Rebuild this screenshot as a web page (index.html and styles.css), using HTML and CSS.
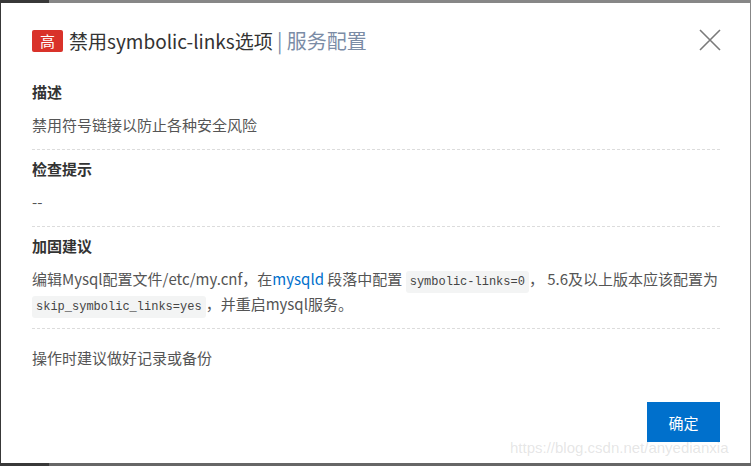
FILE: index.html
```html
<!DOCTYPE html>
<html lang="zh-CN">
  <head>
    <meta charset="UTF-8" />
    <meta name="viewport" content="width=device-width, initial-scale=1.0" />
    <title>禁用symbolic-links选项</title>
    <link rel="stylesheet" href="styles.css">
  </head>
  <body>
    <div class="modal">
      <div class="modal-header">
        <h2 class="modal-title">
          <span class="badge-high">高</span>禁用symbolic-links选项 <span class="title-sub">| 服务配置</span>
        </h2>
        <button type="button" class="btn-close" aria-label="关闭">
          <svg width="22" height="22" viewBox="0 0 22 22">
            <path d="M1 1 L21 21 M21 1 L1 21" stroke="#7a7a7a" stroke-width="1.6" fill="none" />
          </svg>
        </button>
      </div>

      <div class="modal-body">
        <div class="section">
          <h3 class="section-title">描述</h3>
          <p class="section-text">禁用符号链接以防止各种安全风险</p>
        </div>
        <div class="section">
          <h3 class="section-title">检查提示</h3>
          <p class="section-text">--</p>
        </div>
        <div class="section">
          <h3 class="section-title">加固建议</h3>
          <p class="section-text">编辑Mysql配置文件/etc/my.cnf，在<a href="#" class="link">mysqld</a> 段落中配置 <code>symbolic-links=0</code>， 5.6及以上版本应该配置为 <code>skip_symbolic_links=yes</code>，并重启mysql服务。</p>
        </div>
        <p class="note">操作时建议做好记录或备份</p>
      </div>

      <div class="modal-footer">
        <button type="button" class="btn-ok">确定</button>
      </div>

      <span class="watermark">https://blog.csdn.net/anyedianxia</span>
    </div>
  </body>
</html>
```

FILE: styles.css
```css
* {
  box-sizing: border-box;
}

html,
body {
  height: 100%;
}

body {
  margin: 0;
  overflow: hidden;
  font-family: "Noto Sans CJK SC", "Noto Sans", sans-serif;
  /* 모달 뒤쪽 어두운 배경 */
  background:
    linear-gradient(to right, #383838 49px, transparent 49px),
    linear-gradient(to bottom, #878787 463px, #666 463px);
}

.modal {
  position: relative;
  height: 460px;
  margin: 3px 1px 3px 1px;
  padding: 0 30px 0 31px;
  background-color: #fff;
}

.modal-header {
  display: flex;
  align-items: center;
  justify-content: space-between;
  padding: 23px 0 26px;
}

.modal-title {
  display: flex;
  align-items: center;
  margin: 0;
  font-size: 19px;
  font-weight: normal;
  line-height: 30px;
  color: #333;
  white-space: pre;
}

.badge-high {
  display: inline-flex;
  align-items: center;
  justify-content: center;
  width: 31px;
  height: 22px;
  margin-right: 6px;
  border-radius: 2px;
  background-color: #d9322a;
  color: #fff;
  font-size: 15px;
}

.title-sub {
  font-size: 20px;
  color: #7b8ca6;
}

.btn-close {
  display: flex;
  width: 22px;
  height: 22px;
  margin: -3px -1px 0 0;
  padding: 0;
  border: none;
  background: none;
  cursor: pointer;
}

.section {
  padding: 9px 0 12px;
  border-bottom: 1px dashed #dcdcdc;
}

.section:first-child {
  padding-top: 0;
}

.section-title {
  margin: 0 0 10px;
  font-size: 15px;
  font-weight: bold;
  line-height: 20px;
  color: #333;
}

.section-text {
  margin: 0;
  font-size: 15px;
  line-height: 25px;
  color: #555;
}

.link {
  color: #0070cc;
  text-decoration: none;
}

/* line-height 1 : 코드 때문에 줄 간격이 벌어지지 않게 */
code {
  padding: 4px 4px;
  border-radius: 3px;
  background-color: #f3f4f4;
  font-family: "Liberation Mono", monospace;
  font-size: 12px;
  line-height: 1;
  color: #444;
}

.note {
  margin: 0;
  padding-top: 16px;
  font-size: 15px;
  line-height: 25px;
  color: #555;
}

.modal-footer {
  display: flex;
  justify-content: flex-end;
  padding-top: 32px;
}

.btn-ok {
  width: 73px;
  height: 40px;
  border: none;
  background-color: #0070cc;
  color: #fff;
  font-family: inherit;
  font-size: 15px;
  cursor: pointer;
}

.watermark {
  position: absolute;
  left: 509px;
  top: 436px;
  font-family: "Liberation Sans", sans-serif;
  font-size: 15px;
  color: rgba(170, 170, 170, 0.3);
  pointer-events: none;
}
```
